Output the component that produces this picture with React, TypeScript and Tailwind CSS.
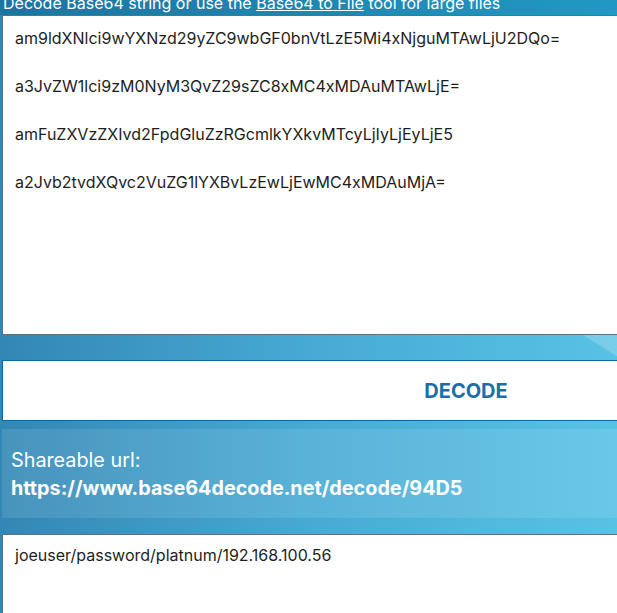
import { useState } from "react";

const encoded = [
  "am9ldXNlci9wYXNzd29yZC9wbGF0bnVtLzE5Mi4xNjguMTAwLjU2DQo=",
  "",
  "a3JvZW1lci9zM0NyM3QvZ29sZC8xMC4xMDAuMTAwLjE=",
  "",
  "amFuZXVzZXIvd2FpdGluZzRGcmlkYXkvMTcyLjIyLjEyLjE5",
  "",
  "a2Jvb2tvdXQvc2VuZG1lYXBvLzEwLjEwMC4xMDAuMjA=",
].join("\n");

export default function App() {
  const [input, setInput] = useState(encoded);
  const [output, setOutput] = useState("joeuser/password/platnum/192.168.100.56");

  return (
    <div className="h-[613px] w-full overflow-hidden bg-gradient-to-r from-[#3387b5] via-[#47aad4] to-[#58c2e5] font-['Inter',sans-serif]">
      <div className="w-[930px] pl-[2px]">
        <div className="-ml-[2px] -mt-[8px] h-[23px] bg-gradient-to-r from-[#1c74a0] to-[#22acd6] pl-[3px]">
          <p className="text-[16px] leading-[22px] text-white">
            Decode Base64 string or use the <a className="underline">Base64 to File</a> tool for large files
          </p>
        </div>

        <textarea
          value={input}
          onChange={(e) => setInput(e.target.value)}
          className="block h-[320px] w-full resize-none border border-[#5f6f7c] bg-white px-[12px] py-[10px] text-[16px] leading-[24px] text-[#1e1e1e] outline-none"
        />

        <div className="relative h-[25px]">
          <div className="absolute left-[581px] top-0 h-[25px] w-[40px] bg-white/20 [clip-path:polygon(0_0,100%_0,100%_100%)]" />
        </div>

        <button
          onClick={() => setOutput(output)}
          className="block h-[61px] w-full border border-[#0e66a3] bg-white text-[20px] font-bold text-[#1c6ea9]"
        >
          DECODE
        </button>

        <div className="mt-[8px] flex h-[89px] flex-col justify-center bg-white/10 px-[9px] text-[19.8px] leading-[28px] text-white">
          <span>Shareable url:</span>
          <span className="font-bold">https://www.base64decode.net/decode/94D5</span>
        </div>

        <textarea
          value={output}
          onChange={(e) => setOutput(e.target.value)}
          className="mt-[16px] block h-[200px] w-full resize-none border border-[#5f6f7c] bg-white px-[12px] py-[8px] text-[16px] leading-[24px] text-[#1e1e1e] outline-none"
        />
      </div>
    </div>
  );
}
